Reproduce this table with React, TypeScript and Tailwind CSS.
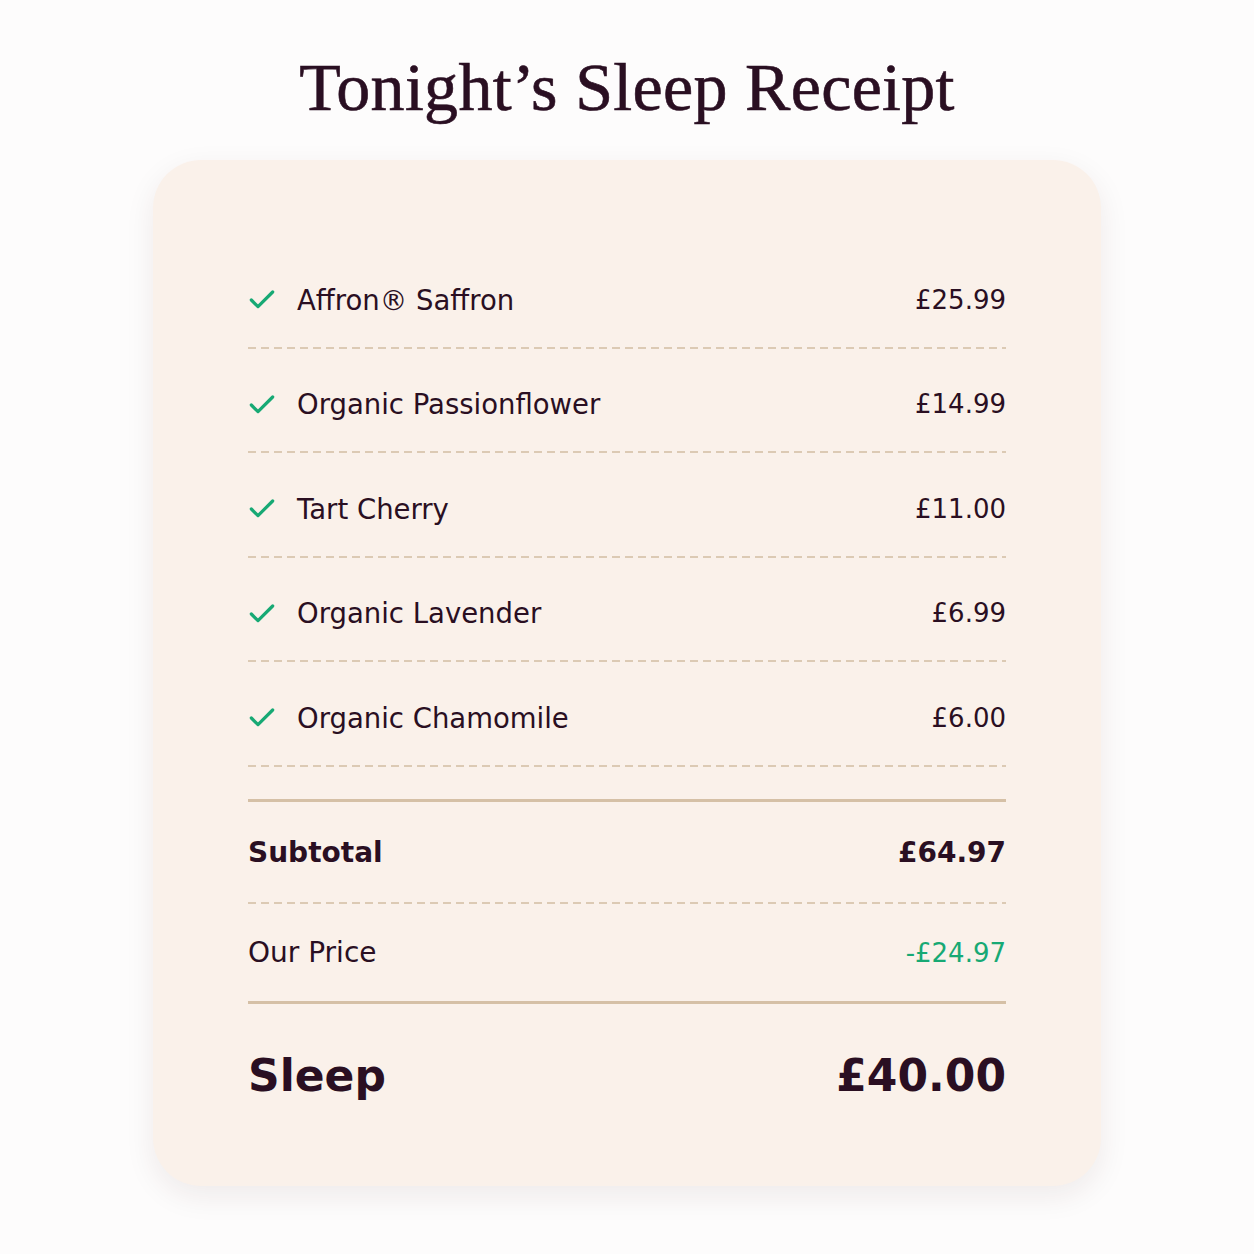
import { Check } from "lucide-react";

type Item = { name: string; price: string };

const items: Item[] = [
  { name: "Affron® Saffron", price: "£25.99" },
  { name: "Organic Passionflower", price: "£14.99" },
  { name: "Tart Cherry", price: "£11.00" },
  { name: "Organic Lavender", price: "£6.99" },
  { name: "Organic Chamomile", price: "£6.00" },
];

const Dashed = () => (
  <div className="h-[2px] w-full bg-[repeating-linear-gradient(to_right,#dccab4_0_8px,transparent_8px_13px)]" />
);

const Solid = () => <div className="h-[3px] w-full bg-[#d5c0a6]" />;

const App = () => {
  return (
    <div className="min-h-[1254px] w-full bg-[#fdfcfc] flex flex-col items-center font-['DejaVu_Sans',sans-serif] text-[#2a0f22]">
      <h1 className="mt-[46px] text-[68px] leading-[82px] font-['Liberation_Serif',serif] tracking-[0.3px] [-webkit-text-stroke:0.6px_#2a0f22]">
        Tonight’s Sleep Receipt
      </h1>
      <div className="mt-[32px] w-[948px] rounded-[48px] bg-[#faf1ea] px-[95px] pt-[84px] pb-[38px] shadow-[0_10px_30px_rgba(60,30,20,0.08)]">
        {items.map((item, idx) => (
          <div key={`${item.name}${idx}`}>
            <div className="h-[102.5px] pt-[10px] flex items-center justify-between">
              <div className="flex items-center gap-[19px]">
                <Check className="w-[32px] h-[32px] -ml-[2px] text-[#17a974]" strokeWidth={2.4} />
                <span className="text-[27.5px]">{item.name}</span>
              </div>
              <span className="text-[26px]">{item.price}</span>
            </div>
            <Dashed />
          </div>
        ))}
        <div className="pt-[32px]">
          <Solid />
        </div>
        <div className="h-[100px] pt-[2px] flex items-center justify-between font-bold text-[28px]">
          <span>Subtotal</span>
          <span>£64.97</span>
        </div>
        <Dashed />
        <div className="h-[97px] pt-[2px] flex items-center justify-between text-[28px]">
          <span>Our Price</span>
          <span className="text-[26px] text-[#17a974]">-£24.97</span>
        </div>
        <Solid />
        <div className="h-[144px] flex items-center justify-between font-bold text-[44px]">
          <span>Sleep</span>
          <span>£40.00</span>
        </div>
      </div>
    </div>
  );
};

export default App;
